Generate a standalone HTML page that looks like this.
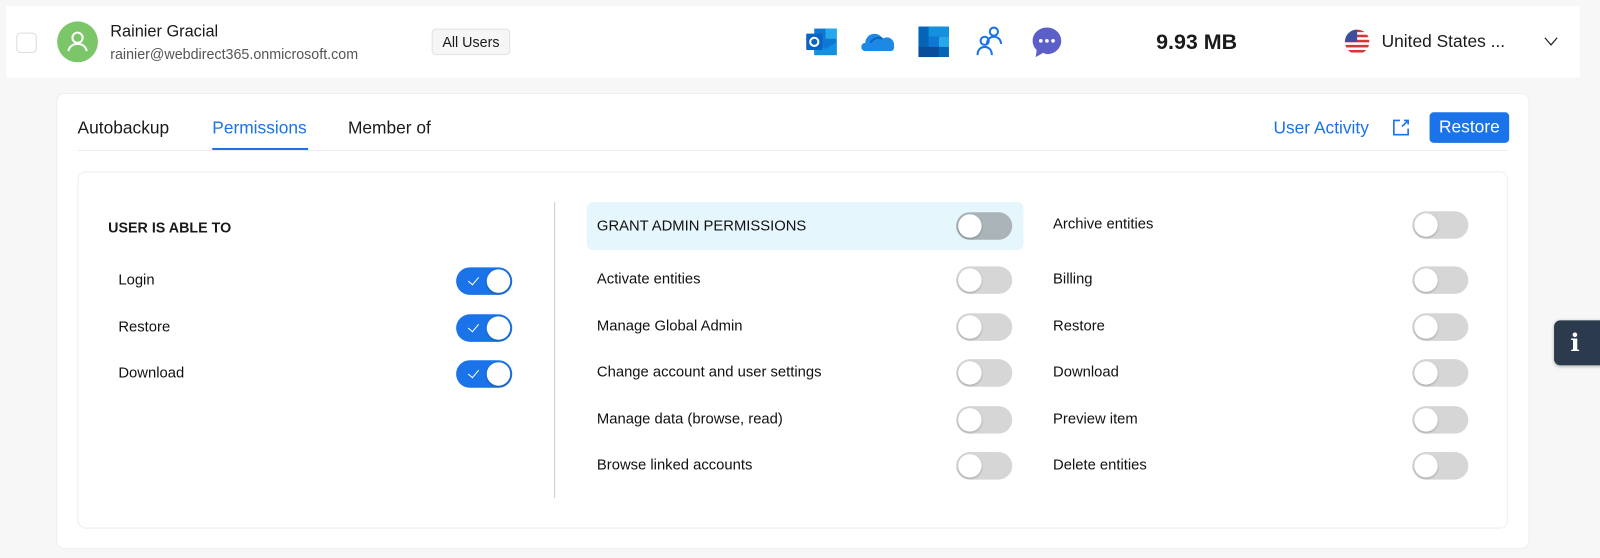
<!DOCTYPE html>
<html><head><meta charset="utf-8"><style>
*{box-sizing:border-box;margin:0;padding:0}
body{width:1600px;height:558px;background:#f7f7f8;font-family:"Liberation Sans",sans-serif;position:relative;overflow:hidden;color:#1a1a1a}
#w{position:absolute;left:0;top:0;width:1568px;height:547px;transform:scale(1.0204);transform-origin:0 0}
.a{position:absolute}
.row{left:6px;top:6px;width:1542px;height:70px;background:#fff}
.tg{position:absolute;width:55px;height:27px;border-radius:14px;background:#d6d6d6}
.tg::after{content:"";position:absolute;left:2px;top:2px;width:23px;height:23px;border-radius:50%;background:#fff;box-shadow:0 1px 2px rgba(0,0,0,.25)}
.tg.on{background:#1a73e8}
.tg.on::after{left:30px}
.tg.on::before{content:"";position:absolute;left:14px;top:7px;width:5px;height:9px;border-right:1.5px solid #fff;border-bottom:1.5px solid #fff;transform:rotate(40deg)}
.tg.dk{background:#a9b3b8}
.l{position:absolute;font-size:14.5px;color:#111}
</style></head><body><div id="w">
<div class="a row"></div>
<div class="a" style="left:16px;top:32px;width:20px;height:20px;border:1px solid #ddd;border-radius:4px;background:#fff"></div>
<div class="a" style="left:56px;top:21px;width:40px;height:40px;border-radius:50%;background:#7cc66a">
<svg width="40" height="40" viewBox="0 0 40 40" fill="none" stroke="#fff" stroke-width="2"><circle cx="20" cy="16" r="5"/><path d="M11 29c1-5 5-7 9-7s8 2 9 7"/></svg></div>
<div class="a" style="left:108px;top:23px;font-size:16px">Rainier Gracial</div>
<div class="a" style="left:108px;top:45px;font-size:14px;color:#555">rainier@webdirect365.onmicrosoft.com</div>
<div class="a" style="left:423px;top:28px;width:77px;height:26px;border:1px solid #e2e2e2;border-radius:4px;background:#f6f6f6;font-size:14px;text-align:center;line-height:24px">All Users</div>
<svg class="a" style="left:790px;top:26px" width="32" height="30" viewBox="0 0 32 30"><rect x="8" y="2" width="22" height="26" fill="#0f78d4"/><rect x="19" y="2" width="11" height="10" fill="#28a8ea"/><path d="M8 15l11 7 11-7v13H8z" fill="#1490df"/><rect x="0" y="7" width="16" height="16" rx="1" fill="#0a64c4"/><circle cx="8" cy="15" r="4" fill="none" stroke="#fff" stroke-width="2"/></svg>
<svg class="a" style="left:844px;top:30px" width="34" height="22" viewBox="0 0 34 22"><path d="M4 20a4 4 0 0 1 0-8 9 9 0 0 1 17-4 7 7 0 0 1 11 7 4 4 0 0 1-2 5z" fill="#1e88e5"/><path d="M9 12a9 9 0 0 1 12-4" stroke="#0b63c6" stroke-width="2" fill="none"/></svg>
<svg class="a" style="left:900px;top:26px" width="30" height="30" viewBox="0 0 30 30"><rect width="30" height="30" fill="#0364b8"/><rect x="10" width="20" height="10" fill="#1490df"/><rect x="20" y="10" width="10" height="10" fill="#28a8ea"/><rect x="10" y="10" width="10" height="10" fill="#0f78d4"/><rect x="0" y="20" width="20" height="10" fill="#0a4e9b"/></svg>
<svg class="a" style="left:955px;top:24px" width="32" height="32" viewBox="0 0 32 32" fill="none" stroke="#1a73e8" stroke-width="2"><circle cx="19" cy="7" r="4"/><path d="M12 20c0-5 3-8 7-8s7 3 7 7"/><circle cx="10" cy="16" r="4"/><path d="M3 30c0-5 3-8 7-8s7 3 7 8"/></svg>
<svg class="a" style="left:1011px;top:25px" width="30" height="32" viewBox="0 0 30 32"><path d="M15 2C7 2 1 8 1 15c0 4 2 7 4 9l-1 7 7-4c1 0 3 1 4 1 8 0 14-6 14-13S23 2 15 2z" fill="#5b5fc7"/><circle cx="9" cy="15" r="1.8" fill="#fff"/><circle cx="15" cy="15" r="1.8" fill="#fff"/><circle cx="21" cy="15" r="1.8" fill="#fff"/></svg>
<div class="a" style="left:1133px;top:30px;font-size:21px;font-weight:bold">9.93 MB</div>
<svg class="a" style="left:1317px;top:28px" width="26" height="26" viewBox="0 0 26 26"><defs><clipPath id="c"><circle cx="13" cy="13" r="12"/></clipPath></defs><g clip-path="url(#c)"><rect width="26" height="26" fill="#fff"/><rect y="1" width="26" height="2.5" fill="#d23a3a"/><rect y="6" width="26" height="2.5" fill="#d23a3a"/><rect y="11" width="26" height="2.5" fill="#d23a3a"/><rect y="16" width="26" height="2.5" fill="#d23a3a"/><rect y="21" width="26" height="2.5" fill="#d23a3a"/><rect width="13" height="13" fill="#3b4f9b"/></g></svg>
<div class="a" style="left:1354px;top:31px;font-size:17px">United States ...</div>
<svg class="a" style="left:1512px;top:35px" width="16" height="11" viewBox="0 0 16 11"><path d="M2 2l6 7 6-7" stroke="#222" stroke-width="1.2" fill="none"/></svg>

<div class="a" style="left:55px;top:91px;width:1444px;height:447px;background:#fff;border:1px solid #eee;border-radius:8px"></div>
<div class="a" style="left:76px;top:116px;font-size:17px">Autobackup</div>
<div class="a" style="left:208px;top:116px;font-size:17px;color:#1a73e8">Permissions</div>
<div class="a" style="left:208px;top:145px;width:94px;height:3px;background:#1a73e8"></div>
<div class="a" style="left:341px;top:116px;font-size:17px">Member of</div>
<div class="a" style="left:76px;top:147px;width:1402px;height:1px;background:#eee"></div>
<div class="a" style="left:1248px;top:116px;font-size:17px;color:#1a73e8">User Activity</div>
<svg class="a" style="left:1363px;top:115px" width="20" height="20" viewBox="0 0 20 20" fill="none" stroke="#1a73e8" stroke-width="1.6"><path d="M9 3H3v14h14v-6"/><path d="M11 9l6-6M13 3h4v4"/></svg>
<div class="a" style="left:1401px;top:110px;width:78px;height:30px;background:#1a73e8;border-radius:4px;color:#fff;font-size:17px;text-align:center;line-height:30px">Restore</div>

<div class="a" style="left:76px;top:168px;width:1402px;height:350px;border:1px solid #eee;border-radius:8px;background:#fff"></div>
<div class="a" style="left:543px;top:198px;width:1px;height:290px;background:#ccc"></div>
<div class="a" style="left:106px;top:215px;font-size:14px;font-weight:bold">USER IS ABLE TO</div>
<div class="l" style="left:116px;top:267px">Login</div><div class="tg on" style="left:447px;top:262px"></div>
<div class="l" style="left:116px;top:313px">Restore</div><div class="tg on" style="left:447px;top:308px"></div>
<div class="l" style="left:116px;top:358px">Download</div><div class="tg on" style="left:447px;top:353px"></div>

<div class="a" style="left:575px;top:198px;width:428px;height:47px;background:#e6f6fd;border-radius:6px"></div>
<div class="l" style="left:585px;top:214px">GRANT ADMIN PERMISSIONS</div><div class="tg dk" style="left:937px;top:208px"></div>
<div class="l" style="left:585px;top:266px">Activate entities</div><div class="tg" style="left:937px;top:261px"></div>
<div class="l" style="left:585px;top:312px">Manage Global Admin</div><div class="tg" style="left:937px;top:307px"></div>
<div class="l" style="left:585px;top:357px">Change account and user settings</div><div class="tg" style="left:937px;top:352px"></div>
<div class="l" style="left:585px;top:403px">Manage data (browse, read)</div><div class="tg" style="left:937px;top:398px"></div>
<div class="l" style="left:585px;top:448px">Browse linked accounts</div><div class="tg" style="left:937px;top:443px"></div>

<div class="l" style="left:1032px;top:212px">Archive entities</div><div class="tg" style="left:1384px;top:207px"></div>
<div class="l" style="left:1032px;top:266px">Billing</div><div class="tg" style="left:1384px;top:261px"></div>
<div class="l" style="left:1032px;top:312px">Restore</div><div class="tg" style="left:1384px;top:307px"></div>
<div class="l" style="left:1032px;top:357px">Download</div><div class="tg" style="left:1384px;top:352px"></div>
<div class="l" style="left:1032px;top:403px">Preview item</div><div class="tg" style="left:1384px;top:398px"></div>
<div class="l" style="left:1032px;top:448px">Delete entities</div><div class="tg" style="left:1384px;top:443px"></div>

<div class="a" style="left:1523px;top:314px;width:80px;height:44px;background:#2b3a4d;border-radius:6px;box-shadow:0 1px 3px rgba(0,0,0,.3)"></div>
<div class="a" style="left:1539px;top:321px;color:#fff;font-size:24px;font-weight:bold;font-family:'DejaVu Serif',serif">i</div>
</div></body></html>
